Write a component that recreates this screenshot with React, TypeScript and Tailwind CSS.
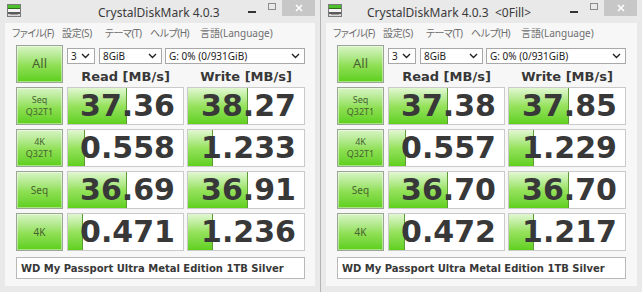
import React from 'react';

type Row = { label: string[]; read: number; write: number; readText: string; writeText: string };

interface WindowProps {
  title: string;
  titleClass: string;
  rows: Row[];
  last?: boolean;
}

const leftRows: Row[] = [
  { label: ['Seq', 'Q32T1'], read: 37.36, write: 38.27, readText: '37.36', writeText: '38.27' },
  { label: ['4K', 'Q32T1'], read: 0.558, write: 1.233, readText: '0.558', writeText: '1.233' },
  { label: ['Seq'], read: 36.69, write: 36.91, readText: '36.69', writeText: '36.91' },
  { label: ['4K'], read: 0.471, write: 1.236, readText: '0.471', writeText: '1.236' },
];

const rightRows: Row[] = [
  { label: ['Seq', 'Q32T1'], read: 37.38, write: 37.85, readText: '37.38', writeText: '37.85' },
  { label: ['4K', 'Q32T1'], read: 0.557, write: 1.229, readText: '0.557', writeText: '1.229' },
  { label: ['Seq'], read: 36.7, write: 36.7, readText: '36.70', writeText: '36.70' },
  { label: ['4K'], read: 0.472, write: 1.217, readText: '0.472', writeText: '1.217' },
];

// CDM meter is log scale: log10(score * 10) / 5
const meter = (v: number) => `${Math.max(0, Math.min(1, Math.log10(v * 10) / 5)) * 100}%`;

function AppIcon() {
  return (
    <svg width="14" height="13" viewBox="0 0 14 13" className="ml-[7px] mt-[4px] shrink-0">
      <rect x="0.5" y="0.5" width="13" height="12" fill="#d9d9d9" stroke="#7a7a7a" />
      <rect x="1" y="1" width="12" height="3" fill="#4cc02a" />
      <rect x="1" y="4" width="12" height="1" fill="#2f6a1c" />
      <rect x="1" y="5" width="12" height="3" fill="#f4f4f4" />
      <rect x="1" y="8" width="12" height="2" fill="#5a5a5a" />
      <rect x="3" y="10" width="8" height="1" fill="#9a9a9a" />
    </svg>
  );
}

function Chevron() {
  return (
    <svg width="9" height="6" viewBox="0 0 9 6" className="shrink-0">
      <polyline points="1,1 4.5,4.5 8,1" fill="none" stroke="#222" strokeWidth="1.4" />
    </svg>
  );
}

function Select({ value, className }: { value: string; className: string }) {
  return (
    <div
      className={`${className} h-[16px] flex items-center justify-between bg-white border border-[#a8a8a8] pl-[3px] pr-[4px] text-[10px] leading-none text-[#222] font-['Noto_Sans',sans-serif]`}
    >
      <span>{value}</span>
      <Chevron />
    </div>
  );
}

function GreenButton({ children, className = '' }: { children: React.ReactNode; className?: string }) {
  return (
    <div
      className={`w-[47px] h-[38px] shrink-0 flex flex-col items-center justify-center border border-[#9aa596] bg-linear-to-b from-[#d8f4c4] via-[#8edf52] via-55% to-[#5ccf17] shadow-[inset_0_0_0_1px_rgba(255,255,255,0.45)] text-[#476232] font-['Noto_Sans',sans-serif] ${className}`}
    >
      {children}
    </div>
  );
}

function ScoreCell({ value, text, className }: { value: number; text: string; className: string }) {
  return (
    <div className={`${className} h-[38px] relative bg-white border border-[#cacaca] overflow-hidden`}>
      <div
        className="absolute left-0 top-0 bottom-0 bg-linear-to-b from-[#e2f7d2] via-[#96e25c] via-50% to-[#5fd01a] border-r border-[#5d9a35]"
        style={{ width: meter(value) }}
      />
      <div className="relative h-full flex items-center justify-end pr-[8px] font-['DejaVu_Sans',sans-serif] font-bold text-[30px] leading-none text-[#383838]">
        {text}
      </div>
    </div>
  );
}

function CdmWindow({ title, titleClass, rows, last }: WindowProps) {
  return (
    <div
      className={`w-[321px] h-[292px] shrink-0 flex flex-col bg-[#e9e9e9] ${last ? '' : 'border-r border-[#b4b4b4]'}`}
    >
      <div className="h-[23px] flex items-start shrink-0">
        <AppIcon />
        <div
          className={`${titleClass} mt-[5px] text-[12px] leading-[16px] whitespace-pre text-[#3a3a3a] font-['Noto_Sans',sans-serif]`}
        >
          {title}
        </div>
        <div className="ml-auto mr-[5px] flex items-start">
          <div className="w-[20px] h-[16px] flex items-center justify-center">
            <div className="w-[8px] h-[2px] mt-[7px] bg-[#333]" />
          </div>
          <div className="w-[20px] h-[16px] flex items-center justify-center">
            <div className="w-[8px] h-[7px] mb-[3px] border border-[#8c8c8c]" />
          </div>
          <div className="w-[33px] h-[16px] bg-[#c7c7c7] flex items-center justify-center">
            <svg width="8" height="8" viewBox="0 0 8 8">
              <path d="M1 1 L7 7 M7 1 L1 7" stroke="#fff" strokeWidth="1.5" />
            </svg>
          </div>
        </div>
      </div>

      <div className="mx-[5px] h-[20px] shrink-0 flex items-center bg-[#f7f7f7] text-[10px] leading-none text-[#6e6e6e] font-['Noto_Sans','Noto_Sans_CJK_JP',sans-serif] [font-feature-settings:'palt']">
        <span className="ml-[7px] w-[50px] tracking-[-0.6px]">ファイル(F)</span>
        <span className="w-[43px] tracking-[-0.3px]">設定(S)</span>
        <span className="w-[45px] tracking-[-0.5px]">テーマ(T)</span>
        <span className="w-[50px] tracking-[-0.5px]">ヘルプ(H)</span>
        <span>言語(Language)</span>
      </div>

      <div className="mx-[5px] flex-1 bg-[#f7f7f7] pl-[11px] pt-[2px] flex flex-col gap-[4px]">
        <div className="flex h-[38px]">
          <GreenButton className="text-[13px]">All</GreenButton>
          <div className="ml-[4px] w-[238px] flex flex-col">
            <div className="mt-[3px] flex">
              <Select value="3" className="w-[28px]" />
              <Select value="8GiB" className="ml-[4px] w-[63px]" />
              <Select value="G: 0% (0/931GiB)" className="ml-[3px] w-[140px]" />
            </div>
            <div className="mt-[5px] flex font-['DejaVu_Sans',sans-serif] font-bold text-[13px] leading-[15px] text-[#383838]">
              <div className="w-[117px] text-center">Read [MB/s]</div>
              <div className="ml-[3px] w-[118px] text-center">Write [MB/s]</div>
            </div>
          </div>
        </div>

        {rows.map((r, i) => (
          <div key={i} className="flex h-[38px]">
            <GreenButton className={r.label.length > 1 ? 'text-[9px] leading-[12px]' : 'text-[10px] leading-[12px]'}>
              {r.label.map((l) => (
                <span key={l}>{l}</span>
              ))}
            </GreenButton>
            <ScoreCell value={r.read} text={r.readText} className="ml-[4px] w-[117px]" />
            <ScoreCell value={r.write} text={r.writeText} className="ml-[3px] w-[118px]" />
          </div>
        ))}

        <div className="mt-[2px] w-[289px] h-[22px] flex items-center bg-white border border-[#b9b9b9] pl-[4px] font-['DejaVu_Sans',sans-serif] font-bold text-[10px] text-[#383838]">
          WD My Passport Ultra Metal Edition 1TB Silver
        </div>
      </div>
      <div className="h-[6px] shrink-0" />
    </div>
  );
}

export default function App() {
  return (
    <div className="w-[642px] h-[292px] flex overflow-hidden bg-[#e9e9e9]">
      <CdmWindow title="CrystalDiskMark 4.0.3" titleClass="ml-[77px]" rows={leftRows} />
      <CdmWindow title="CrystalDiskMark 4.0.3  <0Fill>" titleClass="ml-[25px]" rows={rightRows} last />
    </div>
  );
}
